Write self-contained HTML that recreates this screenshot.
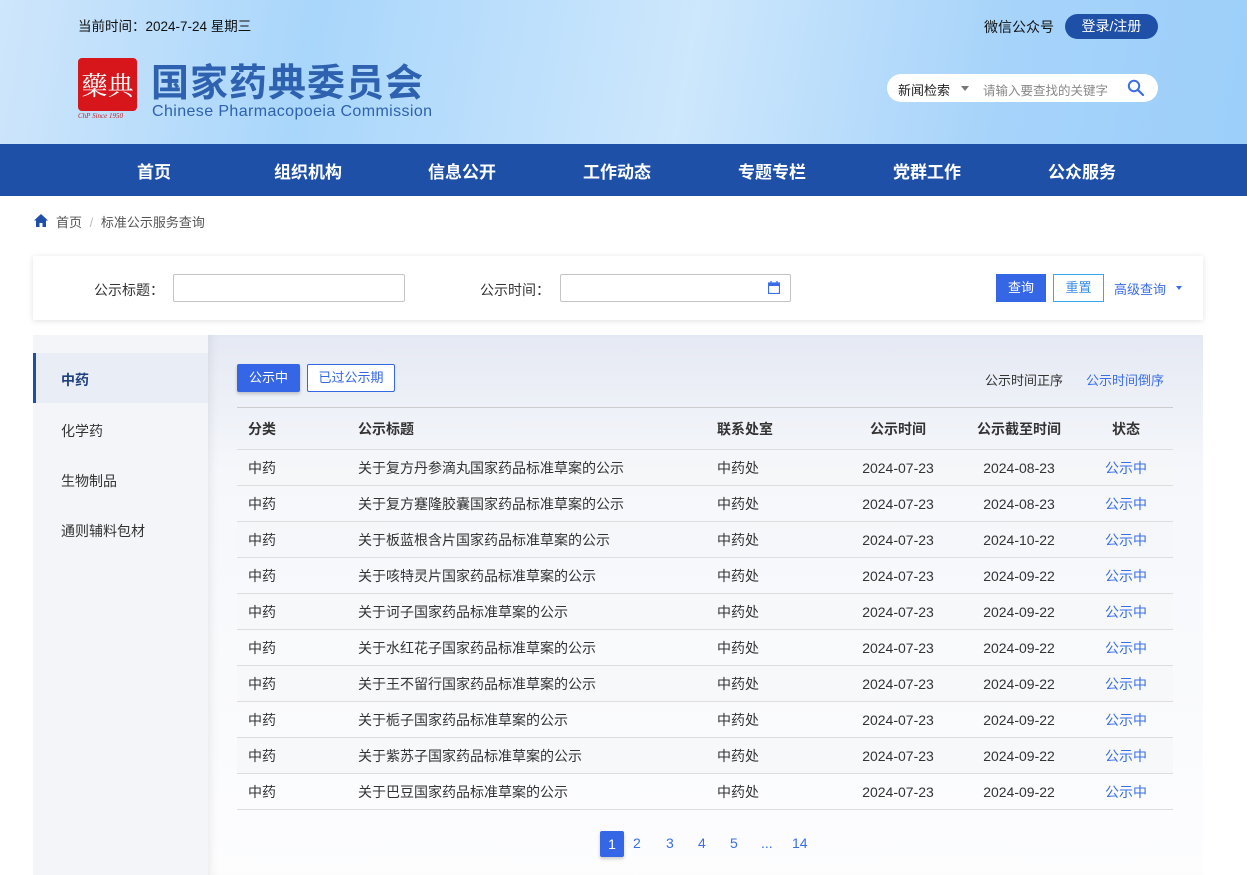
<!DOCTYPE html>
<html><head><meta charset="utf-8">
<style>
*{margin:0;padding:0;box-sizing:border-box}
body{width:1247px;height:875px;overflow:hidden;font-family:"Liberation Sans","Noto Sans CJK SC",sans-serif;background:#fff;position:relative;color:#333;font-size:14px}
.abs{position:absolute}
.header{position:absolute;left:0;top:0;width:1247px;height:144px;background:linear-gradient(100deg,#cfe6fb 0%,#a9d6fb 25%,#cde7fc 55%,#a6d3fa 80%,#9ccffa 100%)}
.nav{position:absolute;left:0;top:144px;width:1247px;height:52px;background:#1e50a8;color:#fff;font-size:17px;font-weight:bold}
.nav span{position:absolute;top:14px}
.card{position:absolute;left:33px;top:256px;width:1170px;height:64px;background:#fff;box-shadow:0 1px 6px rgba(0,0,0,.12)}
.inp{position:absolute;height:28px;border:1px solid #c4c4c4;border-radius:2px;background:#fff}
.side{position:absolute;left:33px;top:335px;width:175px;height:540px;background:#f3f5f9}
.side div{position:absolute;left:28px;font-size:14px;color:#333}
.panel{position:absolute;left:208px;top:335px;width:995px;height:540px;background:linear-gradient(180deg,#e5e9f3 0%,#f5f7fb 25%,#fdfdfe 100%);box-shadow:inset 8px 0 10px -6px rgba(0,0,0,.08)}
table{position:absolute;left:237px;top:407px;width:936px;border-collapse:collapse;font-size:14px;table-layout:fixed}
td,th{height:36px;border-bottom:1px solid #ddd;padding:0;text-align:left;font-weight:normal;color:#333;white-space:nowrap}
th{height:42px;font-weight:bold;border-top:1px solid #ccc}
tr:nth-child(even) td{background:rgba(245,246,248,.6)}
.c1{padding-left:11px;width:121px}.c2{width:359px}.c3{width:120px}.c4{text-align:center;width:122px}.c5{text-align:center;width:120px}.c6{text-align:center;color:#3a6ee8;width:94px}
th.c6{color:#333}
.pg{position:absolute;top:835px;font-size:14px;color:#3a6ee8}
</style></head><body>
<div class="header">
 <div class="abs" style="left:78px;top:15px;font-size:13.5px;color:#111">当前时间：2024-7-24 星期三</div>
 <div class="abs" style="left:78px;top:58px;width:59px;height:53px;background:#d7161c;border-radius:4px;color:#fff;font-size:26px;line-height:53px;text-align:center;font-family:'Noto Serif CJK SC',serif">藥典</div>
 <div class="abs" style="left:78px;top:112px;font-size:7px;color:#c02020;font-style:italic;font-family:'Liberation Serif',serif">ChP Since 1950</div>
 <div class="abs" style="left:151px;top:52px;font-size:38px;font-weight:bold;color:#2e62b0;letter-spacing:1px">国家药典委员会</div>
 <div class="abs" style="left:152px;top:103px;font-size:16px;color:#2e62b0;letter-spacing:0.4px">Chinese Pharmacopoeia Commission</div>
 <div class="abs" style="left:984px;top:17px;font-size:14px;color:#111">微信公众号</div>
 <div class="abs" style="left:1065px;top:14px;width:93px;height:25px;background:#1e50a8;border-radius:13px;color:#fff;font-size:14px;text-align:center;line-height:25px">登录/注册</div>
 <div class="abs" style="left:887px;top:74px;width:271px;height:28px;background:#fff;border-radius:14px">
  <span class="abs" style="left:11px;top:6px;font-size:13px;color:#222">新闻检索</span>
  <span class="abs" style="left:74px;top:12px;border:4px solid transparent;border-top:5px solid #777"></span>
  <span class="abs" style="left:96px;top:6px;font-size:12.5px;color:#888">请输入要查找的关键字</span>
  <svg class="abs" style="left:240px;top:5px" width="18" height="18" viewBox="0 0 18 18"><circle cx="7" cy="7" r="5.2" fill="none" stroke="#3a6ee8" stroke-width="2"/><path d="M11 11l5 5" stroke="#3a6ee8" stroke-width="2.2" stroke-linecap="round"/></svg>
 </div>
</div>
<div class="nav">
 <span style="left:137px">首页</span><span style="left:274px">组织机构</span><span style="left:428px">信息公开</span><span style="left:583px">工作动态</span><span style="left:738px">专题专栏</span><span style="left:893px">党群工作</span><span style="left:1048px">公众服务</span>
</div>
<svg class="abs" style="left:34px;top:214px" width="14" height="13" viewBox="0 0 14 13"><path d="M7 0L0 6.5h2V13h3.5V9h3v4H12V6.5h2z" fill="#1e50a8"/></svg>
<div class="abs" style="left:56px;top:212px;font-size:13px;color:#555">首页 <span style="color:#bbb;margin:0 4px">/</span> 标准公示服务查询</div>
<div class="card">
 <div class="abs" style="left:61px;top:24px;font-size:14px;color:#333">公示标题：</div>
 <div class="inp" style="left:140px;top:18px;width:232px"></div>
 <div class="abs" style="left:447px;top:24px;font-size:14px;color:#333">公示时间：</div>
 <div class="inp" style="left:527px;top:18px;width:231px"><svg class="abs" style="left:207px;top:6px" width="12" height="13" viewBox="0 0 12 13"><rect x="0.5" y="2" width="11" height="10.5" fill="none" stroke="#3a6ee8" stroke-width="1.2"/><rect x="0.5" y="2" width="11" height="3" fill="#3a6ee8"/><path d="M3 0v3M9 0v3" stroke="#3a6ee8" stroke-width="1.3"/></svg></div>
 <div class="abs" style="left:963px;top:18px;width:50px;height:28px;background:#3566e6;color:#fff;font-size:13px;text-align:center;line-height:28px">查询</div>
 <div class="abs" style="left:1020px;top:18px;width:51px;height:28px;border:1px solid #3aa6f0;color:#3a8ee8;font-size:13px;text-align:center;line-height:26px">重置</div>
 <div class="abs" style="left:1081px;top:23px;font-size:13px;color:#3a6ee8">高级查询</div>
 <span class="abs" style="left:1143px;top:30px;border:3.5px solid transparent;border-top:4px solid #3a6ee8"></span>
</div>
<div class="side">
 <div style="left:0;top:18px;width:175px;height:50px;background:#e9edf5;border-left:3px solid #1e50a8"></div>
 <div style="top:35px;font-weight:bold;color:#1e3f80">中药</div>
 <div style="top:86px">化学药</div>
 <div style="top:136px">生物制品</div>
 <div style="top:186px">通则辅料包材</div>
</div>
<div class="panel"></div>
<div class="abs" style="left:237px;top:364px;width:63px;height:28px;background:#3566e6;color:#fff;font-size:13px;text-align:center;line-height:28px;border-radius:2px;box-shadow:0 2px 3px rgba(0,0,0,.2)">公示中</div>
<div class="abs" style="left:307px;top:364px;width:88px;height:28px;border:1px solid #3566e6;color:#3566e6;font-size:13px;text-align:center;line-height:26px;border-radius:2px;background:#fff">已过公示期</div>
<div class="abs" style="left:985px;top:370px;font-size:13px;color:#333">公示时间正序</div>
<div class="abs" style="left:1086px;top:370px;font-size:13px;color:#3a6ee8">公示时间倒序</div>
<table>
<tr><th class="c1">分类</th><th class="c2">公示标题</th><th class="c3">联系处室</th><th class="c4">公示时间</th><th class="c5">公示截至时间</th><th class="c6">状态</th></tr>
<tr><td class="c1">中药</td><td class="c2">关于复方丹参滴丸国家药品标准草案的公示</td><td class="c3">中药处</td><td class="c4">2024-07-23</td><td class="c5">2024-08-23</td><td class="c6">公示中</td></tr>
<tr><td class="c1">中药</td><td class="c2">关于复方蹇隆胶囊国家药品标准草案的公示</td><td class="c3">中药处</td><td class="c4">2024-07-23</td><td class="c5">2024-08-23</td><td class="c6">公示中</td></tr>
<tr><td class="c1">中药</td><td class="c2">关于板蓝根含片国家药品标准草案的公示</td><td class="c3">中药处</td><td class="c4">2024-07-23</td><td class="c5">2024-10-22</td><td class="c6">公示中</td></tr>
<tr><td class="c1">中药</td><td class="c2">关于咳特灵片国家药品标准草案的公示</td><td class="c3">中药处</td><td class="c4">2024-07-23</td><td class="c5">2024-09-22</td><td class="c6">公示中</td></tr>
<tr><td class="c1">中药</td><td class="c2">关于诃子国家药品标准草案的公示</td><td class="c3">中药处</td><td class="c4">2024-07-23</td><td class="c5">2024-09-22</td><td class="c6">公示中</td></tr>
<tr><td class="c1">中药</td><td class="c2">关于水红花子国家药品标准草案的公示</td><td class="c3">中药处</td><td class="c4">2024-07-23</td><td class="c5">2024-09-22</td><td class="c6">公示中</td></tr>
<tr><td class="c1">中药</td><td class="c2">关于王不留行国家药品标准草案的公示</td><td class="c3">中药处</td><td class="c4">2024-07-23</td><td class="c5">2024-09-22</td><td class="c6">公示中</td></tr>
<tr><td class="c1">中药</td><td class="c2">关于栀子国家药品标准草案的公示</td><td class="c3">中药处</td><td class="c4">2024-07-23</td><td class="c5">2024-09-22</td><td class="c6">公示中</td></tr>
<tr><td class="c1">中药</td><td class="c2">关于紫苏子国家药品标准草案的公示</td><td class="c3">中药处</td><td class="c4">2024-07-23</td><td class="c5">2024-09-22</td><td class="c6">公示中</td></tr>
<tr><td class="c1">中药</td><td class="c2">关于巴豆国家药品标准草案的公示</td><td class="c3">中药处</td><td class="c4">2024-07-23</td><td class="c5">2024-09-22</td><td class="c6">公示中</td></tr>
</table>
<div class="abs" style="left:600px;top:831px;width:24px;height:26px;background:#3566e6;color:#fff;font-size:14px;text-align:center;line-height:26px;border-radius:2px;box-shadow:0 2px 3px rgba(0,0,0,.2)">1</div>
<div class="pg" style="left:633px">2</div><div class="pg" style="left:666px">3</div><div class="pg" style="left:698px">4</div><div class="pg" style="left:730px">5</div><div class="pg" style="left:761px">...</div><div class="pg" style="left:792px">14</div>
</body></html>
